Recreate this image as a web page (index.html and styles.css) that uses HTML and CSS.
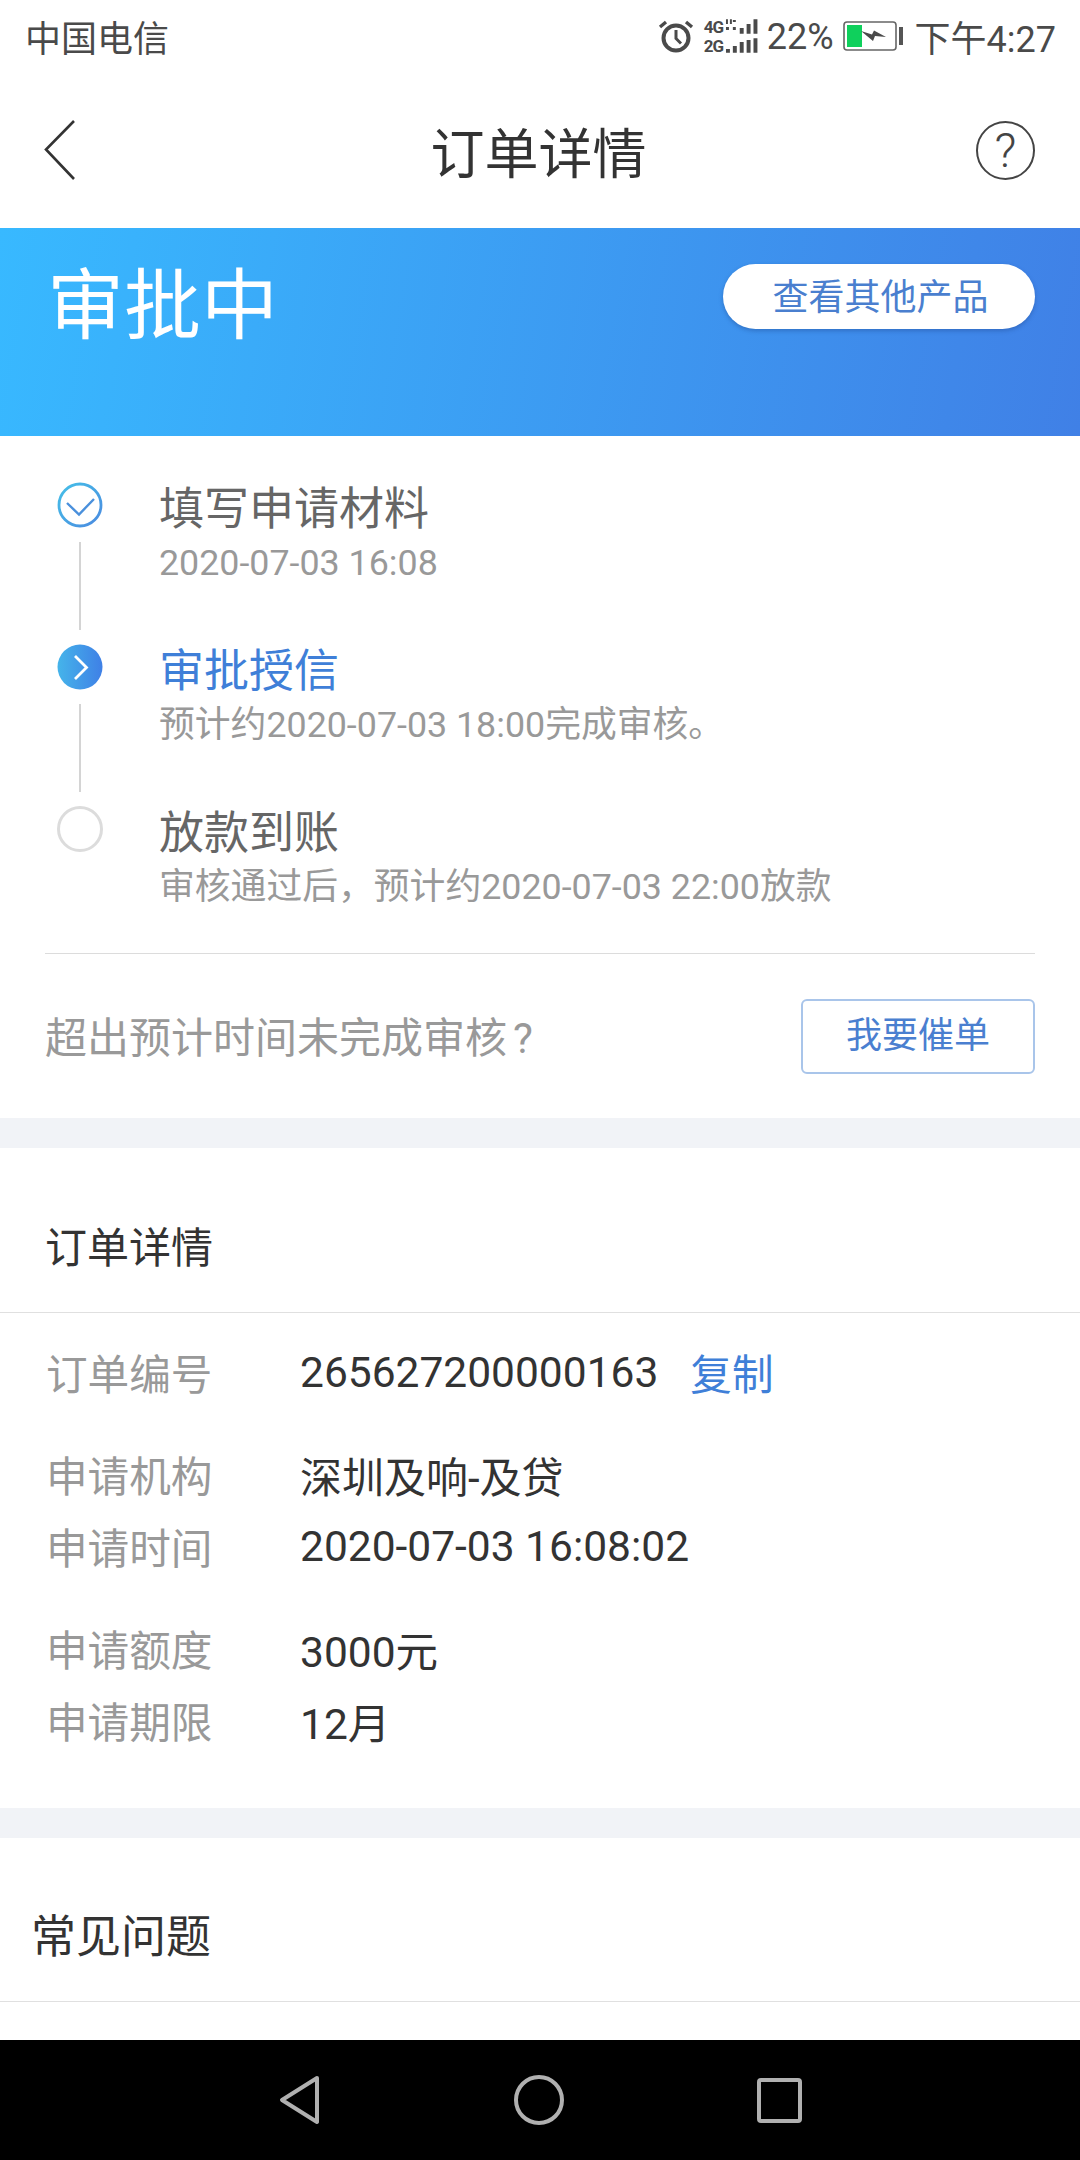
FILE: index.html
```html
<!DOCTYPE html>
<html>
<head>
    <title>订单详情</title>
    <link rel="stylesheet" href="styles.css">
</head>
<body>
    <div class="screen">
        <div class="status-bar">
            <span class="carrier">中国电信</span>
            <div class="status-right">
                <svg class="alarm" width="36" height="36" viewBox="0 0 36 36">
                    <circle cx="18" cy="20" r="12.5" fill="none" stroke="#4a4a4a" stroke-width="4"/>
                    <path d="M18 12v8.500l5 5" fill="none" stroke="#4a4a4a" stroke-width="3"/>
                    <path d="M2 9l6-5M34 9l-6-5" fill="none" stroke="#4a4a4a" stroke-width="3.4"/>
                </svg>
                <div class="signal">
                    <div class="signal-row">
                        <span class="net">4G</span>
                        <svg width="36" height="15" viewBox="0 0 36 15"><path d="M1 0h2v5H1zM5 0h2v5H5zM8 1h3v2H8zM1 8h3v3H1zM8 8h3v3H8zM15 9h4v6h-4zM22 5h4v10h-4zM29 0h4v15h-4z" fill="#4a4a4a"/></svg>
                    </div>
                    <div class="signal-row">
                        <span class="net">2G</span>
                        <svg width="36" height="15" viewBox="0 0 36 15"><path d="M1 11h4v4H1zM8 8h4v7H8zM15 4h4v11h-4zM22 2h4v13h-4zM29 0h4v15h-4z" fill="#4a4a4a"/></svg>
                    </div>
                </div>
                <span class="percent">22%</span>
                <svg class="battery" width="61" height="32" viewBox="0 0 61 32">
                    <rect x="1" y="2" width="52" height="28" rx="3" fill="none" stroke="#666" stroke-width="1.600"/>
                    <rect x="4" y="5" width="15" height="22" fill="#0fd05c"/>
                    <path d="M18 11l11 3.500 2-4 12 6.500-11-1-2 5z" fill="#4a4a4a"/>
                    <rect x="56" y="7" width="4" height="18" fill="#555"/>
                </svg>
                <span class="clock">下午4:27</span>
            </div>
        </div>

        <div class="top-nav">
            <svg width="36" height="60" viewBox="0 0 36 60"><path d="M32 1L4 29.500 32 59" fill="none" stroke="#333" stroke-width="2.600"/></svg>
            <h1>订单详情</h1>
            <div class="help">?</div>
        </div>

        <div class="content">
            <div class="banner">
                <div class="banner-title">审批中</div>
                <div class="other-btn">查看其他产品</div>
            </div>

            <div class="progress">
                <div class="step">
                    <div class="step-mark">
                        <svg width="46" height="46" viewBox="0 0 46 46">
                            <defs>
                                <linearGradient id="ringBlue" x1="0" y1="0" x2="1" y2="1">
                                    <stop offset="0" stop-color="#45c0e8"/>
                                    <stop offset="1" stop-color="#4a8ae0"/>
                                </linearGradient>
                            </defs>
                            <circle cx="23" cy="23" r="21" fill="none" stroke="url(#ringBlue)" stroke-width="2.800"/>
                            <path d="M10 21l12 11.500L37 17" fill="none" stroke="#4a90dc" stroke-width="2.400"/>
                        </svg>
                    </div>
                    <div class="step-text">
                        <div class="step-title">填写申请材料</div>
                        <div class="step-sub">2020-07-03 16:08</div>
                    </div>
                </div>
                <div class="step">
                    <div class="step-mark">
                        <svg width="46" height="46" viewBox="0 0 46 46">
                            <defs>
                                <linearGradient id="fillBlue" x1="0" y1="0" x2="1" y2="0">
                                    <stop offset="0" stop-color="#45b4ea"/>
                                    <stop offset="1" stop-color="#3f80e6"/>
                                </linearGradient>
                            </defs>
                            <circle cx="23" cy="23" r="22.500" fill="url(#fillBlue)"/>
                            <path d="M18 12L29.500 23.500 18 35" fill="none" stroke="#fff" stroke-width="2.800"/>
                        </svg>
                    </div>
                    <div class="step-text">
                        <div class="step-title step-active">审批授信</div>
                        <div class="step-sub">预计约2020-07-03 18:00完成审核。</div>
                    </div>
                </div>
                <div class="step step-last">
                    <div class="step-mark">
                        <div class="ring"></div>
                    </div>
                    <div class="step-text">
                        <div class="step-title">放款到账</div>
                        <div class="step-sub">审核通过后，预计约2020-07-03 22:00放款</div>
                    </div>
                </div>
            </div>

            <div class="urge">
                <span class="urge-text">超出预计时间未完成审核<span class="urge-mark">?</span></span>
                <div class="urge-btn">我要催单</div>
            </div>

            <div class="gap"></div>

            <div class="section-head">订单详情</div>
            <div class="details">
                <div class="row">
                    <span class="row-label">订单编号</span>
                    <span class="row-value">265627200000163</span>
                    <span class="copy">复制</span>
                </div>
                <div class="row row-group">
                    <span class="row-label">申请机构</span>
                    <span class="row-value row-cjk">深圳及响-及贷</span>
                </div>
                <div class="row">
                    <span class="row-label">申请时间</span>
                    <span class="row-value">2020-07-03 16:08:02</span>
                </div>
                <div class="row row-group">
                    <span class="row-label">申请额度</span>
                    <span class="row-value">3000元</span>
                </div>
                <div class="row">
                    <span class="row-label">申请期限</span>
                    <span class="row-value">12月</span>
                </div>
            </div>

            <div class="gap"></div>

            <div class="section-head faq-head">常见问题</div>
        </div>

        <div class="bottom-nav">
            <svg width="42" height="50" viewBox="0 0 42 50"><path d="M38 3L3 25l35 22z" fill="none" stroke="#b0b0b0" stroke-width="4" stroke-linejoin="round"/></svg>
            <svg width="50" height="50" viewBox="0 0 50 50"><circle cx="25" cy="25" r="23" fill="none" stroke="#b0b0b0" stroke-width="4"/></svg>
            <svg width="45" height="45" viewBox="0 0 45 45"><rect x="2" y="2" width="41" height="41" rx="2" fill="none" stroke="#b0b0b0" stroke-width="4"/></svg>
        </div>
    </div>
</body>
</html>
```

FILE: styles.css
```css
body {
    margin: 0;
    padding: 0;
    background-color: #fff;
    font-family: Roboto, "Noto Sans CJK SC", sans-serif;
}
.screen {
    width: 1080px;
    height: 2160px;
    display: flex;
    flex-direction: column;
    overflow: hidden;
}

/* status bar */
.status-bar {
    height: 72px;
    padding: 0 24px 0 25px;
    display: flex;
    justify-content: space-between;
    align-items: center;
    color: #4a4a4a;
    font-size: 36px;
}
.status-right {
    display: flex;
    align-items: center;
}
.alarm {
    margin-left: 1px;
    margin-right: 10px;
}
.signal {
    display: flex;
    flex-direction: column;
    gap: 3px;
    width: 57px;
}
.signal-row {
    display: flex;
    align-items: center;
    height: 16px;
}
.net {
    font-size: 17px;
    line-height: 16px;
    font-weight: bold;
    width: 22px;
    letter-spacing: -1px;
}
.percent {
    margin-left: 6px;
    padding-top: 2px;
}
.battery {
    margin-left: 9px;
}
.clock {
    margin-left: 11px;
}

/* title bar */
.top-nav {
    height: 156px;
    padding: 0 45px 0 42px;
    display: grid;
    grid-template-columns: 1fr auto 1fr;
    align-items: center;
}
.top-nav h1 {
    margin: 0;
    font-size: 54px;
    font-weight: normal;
    color: #333;
}
.help {
    justify-self: end;
    width: 55px;
    height: 55px;
    border: 2.500px solid #444;
    border-radius: 50%;
    display: flex;
    justify-content: center;
    align-items: center;
    font-size: 48px;
    font-weight: 300;
    color: #444;
}

.content {
    flex: 1;
    overflow: hidden;
}

/* blue banner */
.banner {
    height: 208px;
    padding: 36px 45px 0 47px;
    box-sizing: border-box;
    display: flex;
    justify-content: space-between;
    align-items: flex-start;
    background: linear-gradient(100deg, #38b9ff, #4080e6);
}
.banner-title {
    margin-top: 3px;
    font-size: 77px;
    line-height: 80px;
    color: #fff;
}
.other-btn {
    width: 312px;
    height: 65px;
    padding-left: 3px;
    box-sizing: border-box;
    border-radius: 33px;
    background-color: #fff;
    box-shadow: 0 2px 4px rgba(30, 70, 140, 0.4);
    color: #4a7fcf;
    font-size: 36px;
    line-height: 69px;
    text-align: center;
}

/* progress steps */
.progress {
    margin: 0 45px;
    padding-top: 44px;
    height: 518px;
    box-sizing: border-box;
    border-bottom: 1px solid #dcdcdc;
}
.step {
    display: flex;
    height: 162px;
}
.step-mark {
    width: 70px;
    margin-left: 12px;
    margin-right: 32px;
    position: relative;
    padding-top: 2px;
}
.step-mark::after {
    content: "";
    position: absolute;
    left: 22px;
    top: 62px;
    width: 2px;
    height: 88px;
    background-color: #d4d4d4;
}
.step-last .step-mark::after {
    display: none;
}
.ring {
    width: 40px;
    height: 40px;
    border: 3px solid #dcdcdc;
    border-radius: 50%;
}
.step-title {
    font-size: 45px;
    line-height: 60px;
    color: #666;
}
.step-active {
    color: #3f7fd8;
}
.step-sub {
    font-size: 35.800px;
    line-height: 46px;
    color: #999;
}

/* urge row */
.urge {
    height: 164px;
    margin: 0 45px;
    display: flex;
    justify-content: space-between;
    align-items: center;
    color: #999;
    font-size: 42px;
}
.urge-text {
    margin-bottom: 4px;
}
.urge-mark {
    margin-left: 6px;
}
.urge-btn {
    width: 234px;
    height: 75px;
    box-sizing: border-box;
    border: 2px solid #a9c5ea;
    border-radius: 6px;
    color: #4a7fd0;
    font-size: 36px;
    line-height: 71px;
    text-align: center;
}

.gap {
    height: 30px;
    background-color: #f1f3f7;
}

/* order details */
.section-head {
    height: 165px;
    box-sizing: border-box;
    padding: 71px 0 0 45px;
    border-bottom: 1px solid #e0e0e0;
    font-size: 42px;
    line-height: 60px;
    color: #333;
}
.faq-head {
    height: 164px;
    padding-left: 31px;
    padding-top: 70px;
    font-size: 45px;
}
.details {
    height: 495px;
    box-sizing: border-box;
    padding: 23px 46px 0;
    font-size: 42.500px;
}
.row {
    height: 72px;
    display: flex;
    align-items: center;
}
.row-group {
    margin-top: 30px;
}
.row-label {
    width: 254px;
    font-size: 41.600px;
    color: #999;
}
.row-value {
    color: #333;
}
.row-cjk {
    font-size: 42px;
}
.copy {
    margin-left: 32px;
    font-size: 41.600px;
    color: #3f7fd8;
}

/* android nav */
.bottom-nav {
    height: 120px;
    padding: 0 0 0 279px;
    display: flex;
    align-items: center;
    gap: 193px;
    background-color: #000;
}
```
